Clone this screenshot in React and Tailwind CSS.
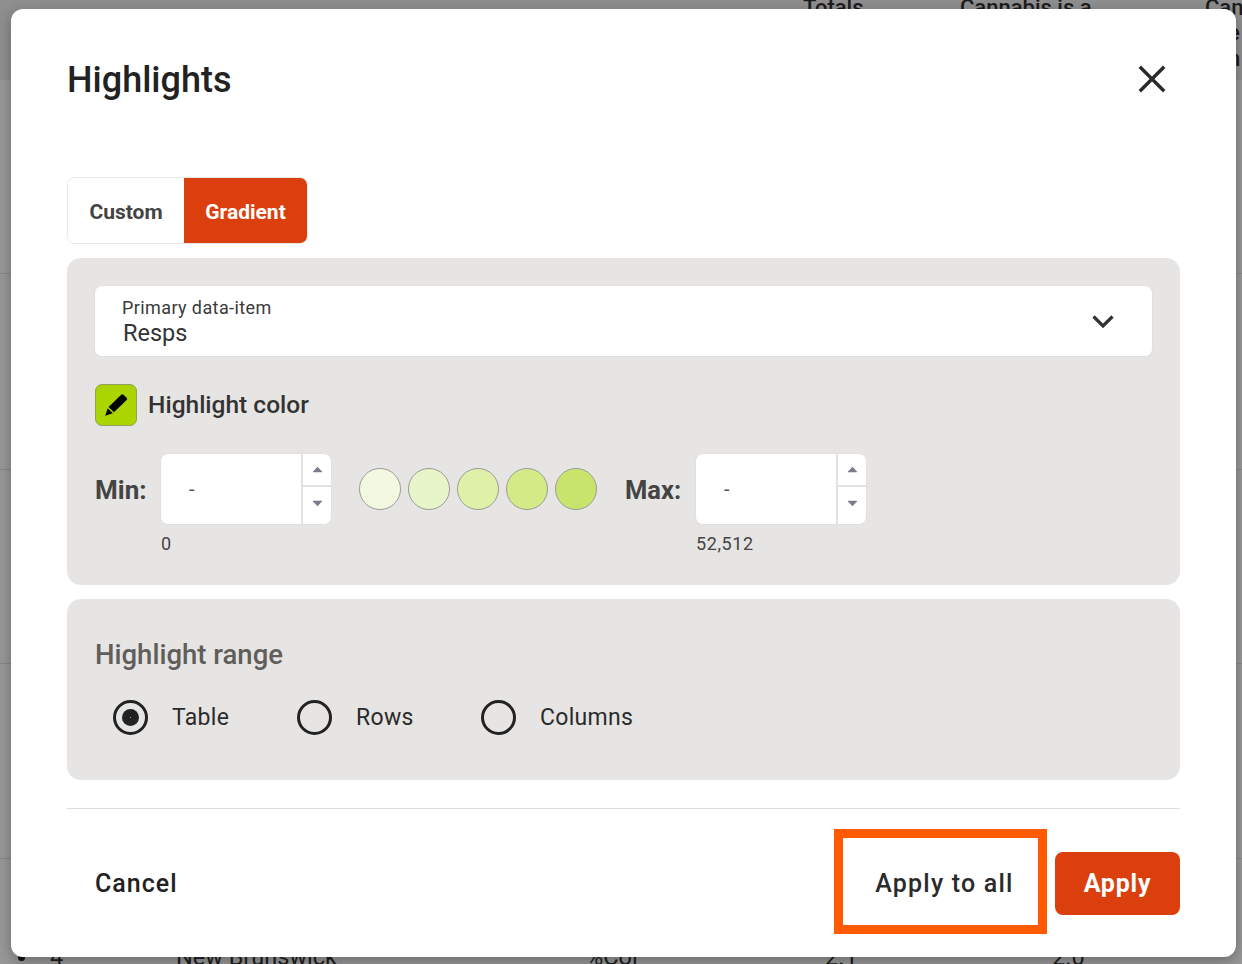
import React from "react";

const font = { fontFamily: "Roboto, sans-serif" };

function Spin({ flip }) {
  return (
    <svg width="11" height="7" viewBox="0 0 11 7" className={flip ? "rotate-180" : ""}>
      <path d="M5.5 .8 L10 5.4 Q10.4 6.2 9.6 6.2 H1.4 Q.6 6.2 1 5.4 Z" fill="#787d88" />
    </svg>
  );
}

function NumberBox() {
  return (
    <div className="flex w-[172px] h-[72px] bg-white rounded-[8px] border border-[#e1e0de]">
      <div className="flex-1 flex items-center pl-[28px] text-[20px] text-[#555]">-</div>
      <div className="w-[30px] flex flex-col border-l-2 border-[#e3e2e0]">
        <div className="h-[33px] flex items-center justify-center border-b-2 border-[#e3e2e0]"><Spin /></div>
        <div className="flex-1 flex items-center justify-center pb-[5px]"><Spin flip /></div>
      </div>
    </div>
  );
}

function Radio({ label, checked, className }) {
  return (
    <div className={"flex items-center " + className}>
      <div className="w-[35px] h-[35px] rounded-full border-[3px] border-[#222] flex items-center justify-center">
        {checked && (
          <div className="w-[17px] h-[17px] rounded-full bg-[#222] flex items-center justify-center">
            <div className="w-px h-px bg-[#aaa]" />
          </div>
        )}
      </div>
      <span className="ml-[24px] text-[23px] leading-[28px] text-[#2b2b2b] tracking-[0.3px]">{label}</span>
    </div>
  );
}

const Bubble = ({ className }) => (
  <div className={"w-[42px] h-[42px] rounded-full border border-[#9c9c98] " + className} />
);

export default function App() {
  return (
    <div style={font} className="relative h-[964px] w-[1242px] overflow-hidden bg-[#989898]">
      {/* dimmed page behind the dialog */}
      <div className="text-[23.5px] text-[#1c1c1c]">
        <div className="h-[80px] bg-[#8f8f8f] relative font-medium text-[22px] leading-[26px]">
          <span className="absolute left-[803px] top-[-5px]">Totals</span>
          <span className="absolute left-[960px] top-[-5px] whitespace-nowrap">Cannabis is a</span>
          <span className="absolute left-[1205px] top-[-5px] whitespace-nowrap">Can</span>
          <span className="absolute left-[1228px] top-[20px]">e</span>
          <span className="absolute left-[1228px] top-[46px]">n</span>
        </div>
        <div className="h-[194px] border-b border-[#888]" />
        <div className="h-[196px] border-b border-[#888]" />
        <div className="h-[194px] border-b border-[#888]" />
        <div className="h-[195px] border-b border-[#888]" />
        <div className="h-[105px] relative leading-[28px]">
          <span className="absolute left-[18px] top-[95px] w-[7px] h-[7px] rounded-full bg-[#111]" />
          <span className="absolute left-[50px] top-[84px]">4</span>
          <span className="absolute left-[176px] top-[84px] whitespace-nowrap">New Brunswick</span>
          <span className="absolute left-[586px] top-[84px]">%Col</span>
          <span className="absolute left-[825px] top-[84px]">2.1</span>
          <span className="absolute left-[1052px] top-[84px]">2.0</span>
        </div>
      </div>

      {/* dialog */}
      <div className="absolute left-[11px] top-[9px] w-[1225px] h-[948px] bg-white rounded-[12px] px-[56px] flex flex-col shadow-[0_4px_14px_rgba(0,0,0,0.3)]">
        <div className="h-[168px] pt-[47px] flex justify-between">
          <h1 className="mt-px text-[36px] leading-[46px] font-medium text-[#222]">Highlights</h1>
          <svg width="46" height="46" viewBox="0 0 46 46" className="mr-[5px]">
            <path d="M12 12 L34 34 M34 12 L12 34" stroke="#2a2a2a" strokeWidth="3.4" strokeLinecap="square" fill="none" />
          </svg>
        </div>

        <div className="flex w-[241px] h-[67px] rounded-[8px] border border-[#e8e8e8] overflow-hidden self-start text-[21px] font-bold">
          <div className="w-[116px] flex items-center justify-center pt-[4px] text-[#444] bg-white">Custom</div>
          <div className="flex-1 flex items-center justify-center pt-[4px] text-white bg-[#db3f0d]">Gradient</div>
        </div>

        <div className="mt-[14px] h-[327px] rounded-[14px] bg-[#e6e5e3] pt-[27px] px-[28px]">
          <div className="-mx-px h-[72px] bg-white rounded-[8px] border border-[#e1e0de] flex items-center justify-between pl-[27px] pr-[37px]">
            <div>
              <div className="text-[18px] leading-[22px] text-[#3a3a3a] tracking-[0.4px]">Primary data-item</div>
              <div className="mt-px text-[23.5px] leading-[26px] text-[#333] ml-px">Resps</div>
            </div>
            <svg width="24" height="24" viewBox="0 0 24 24">
              <path d="M2.5 7.5 L12 17 L21.5 7.5" stroke="#333" strokeWidth="3.2" fill="none" />
            </svg>
          </div>

          <div className="mt-[27px] flex items-center">
            <div className="w-[42px] h-[42px] rounded-[7px] bg-[#aad500] border border-[#93a05e] flex items-center justify-center">
              <svg width="24" height="24" viewBox="0 0 24 24">
                <path d="M17.2 1.8 Q18.3 .9 19.5 1.8 L22.6 4.7 Q23.6 5.9 22.6 7 L10 19.3 L4.6 14 Z" fill="#000" />
                <path d="M3.7 15.2 L8.8 20.3 L1.2 22.8 Z" fill="#000" />
              </svg>
            </div>
            <span className="ml-[11px] text-[24.5px] leading-[34px] font-medium text-[#333]">Highlight color</span>
          </div>

          <div className="mt-[27px] flex items-start">
            <div className="w-[65px] h-[72px] flex items-center pt-[3px] text-[26px] font-bold text-[#444]">Min:</div>
            <div>
              <NumberBox />
              <div className="mt-[9px] ml-px text-[18px] leading-[20px] text-[#444]">0</div>
            </div>
            <div className="h-[72px] ml-[27px] flex items-center gap-[7px]">
              <Bubble className="bg-[#f3f9e0]" />
              <Bubble className="bg-[#e8f5c8]" />
              <Bubble className="bg-[#dff0a8]" />
              <Bubble className="bg-[#d3ea87]" />
              <Bubble className="bg-[#c9e46a]" />
            </div>
            <div className="w-[70px] h-[72px] ml-[28px] flex items-center pt-[3px] text-[25.5px] font-bold text-[#444]">Max:</div>
            <div>
              <NumberBox />
              <div className="mt-[9px] ml-px text-[18px] leading-[20px] text-[#444] tracking-[0.6px]">52,512</div>
            </div>
          </div>
        </div>

        <div className="mt-[14px] h-[181px] rounded-[14px] bg-[#e6e5e3] pt-[39px] px-[28px]">
          <div className="text-[27.5px] leading-[34px] font-medium text-[#5f5e5b]">Highlight range</div>
          <div className="mt-[28px] ml-[18px] flex">
            <Radio checked label="Table" className="w-[184px]" />
            <Radio label="Rows" className="w-[184px]" />
            <Radio label="Columns" />
          </div>
        </div>

        <div className="mt-[28px] border-t border-[#dedede] flex items-center justify-between h-[149px]">
          <span className="ml-[28px] pt-[2px] text-[25px] font-medium text-[#222] tracking-[1px]">Cancel</span>
          <div className="flex items-center">
            <div className="w-[213px] h-[105px] mb-[4px] border-[9px] border-[#ff5a00] flex items-center justify-center text-[25px] font-medium text-[#2b2b2b] tracking-[1.2px] pl-[8px] pt-[6px]">Apply to all</div>
            <div className="ml-[8px] w-[125px] h-[63px] rounded-[8px] bg-[#db3f0d] flex items-center justify-center pt-[2px] text-[25px] font-bold text-white tracking-[0.8px]">Apply</div>
          </div>
        </div>
      </div>
    </div>
  );
}
